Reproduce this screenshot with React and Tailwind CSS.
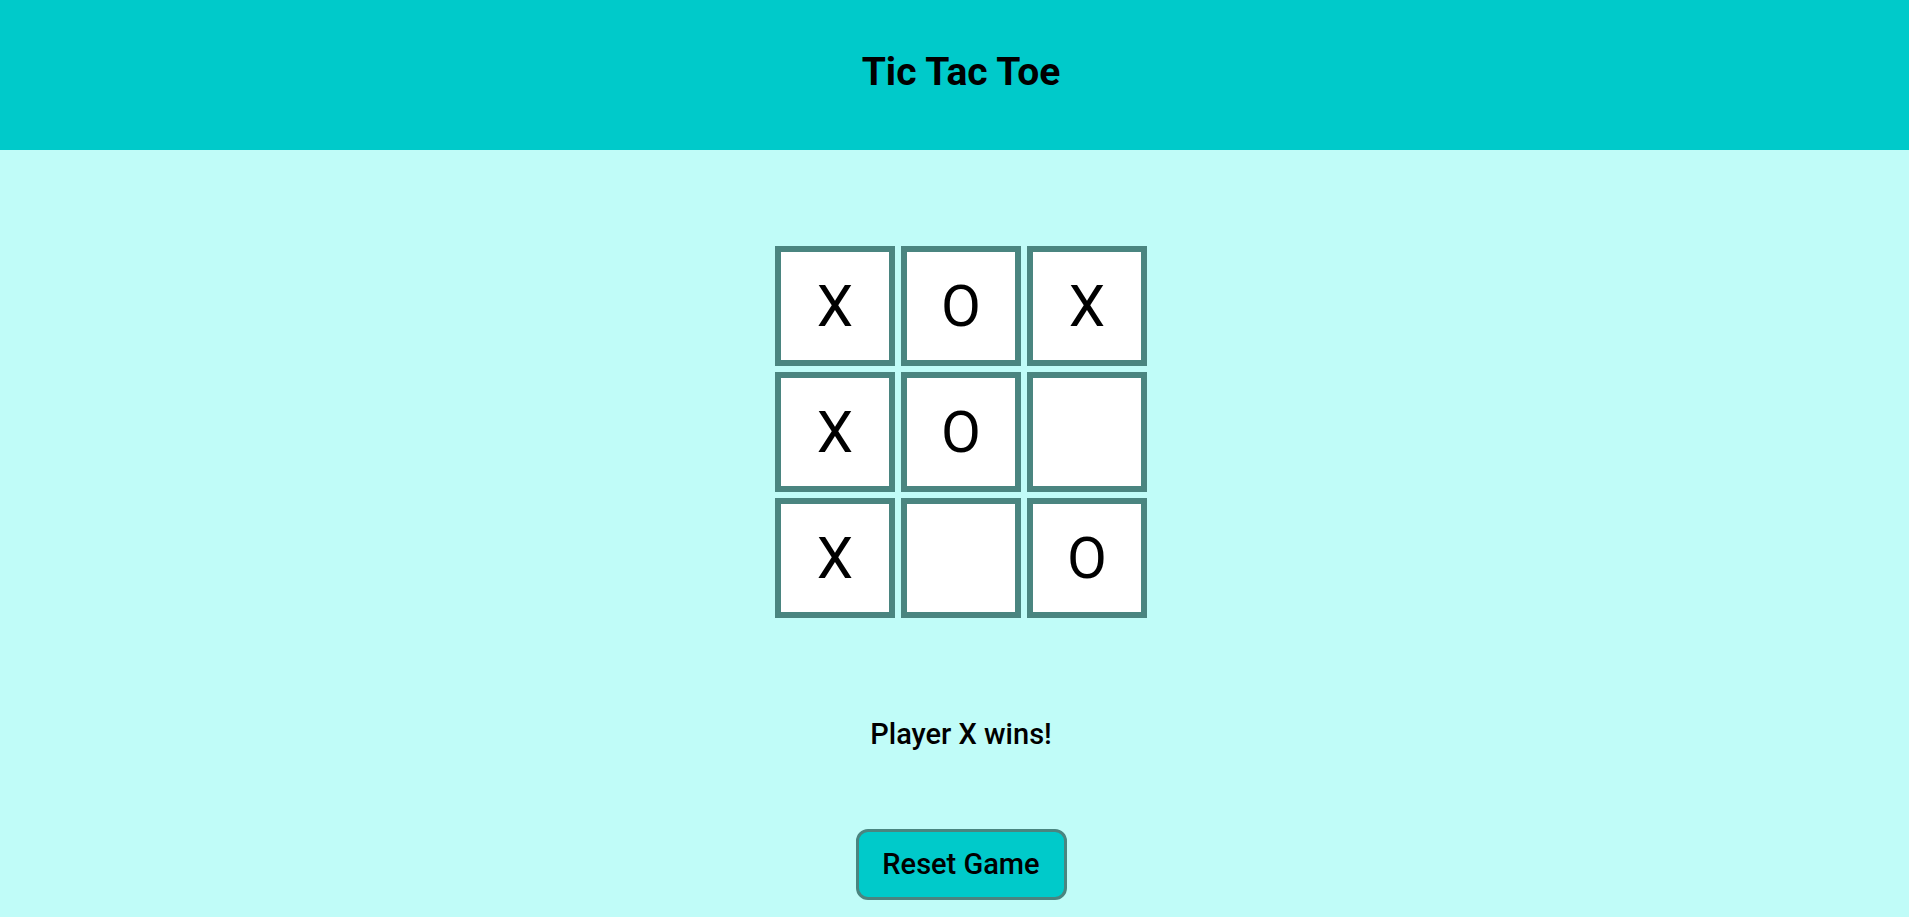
import React, { useState } from 'react';

const START = ['X', 'O', 'X', 'X', 'O', '', 'X', '', 'O'];

// Cell of the board
function Square({ value, onClick }) {
    return (
        <button
            onClick={onClick}
            className="w-[120px] h-[120px] bg-white border-[6px] border-[#4a8580] flex items-center justify-center text-[58px] leading-none text-black font-normal"
        >
            {value}
        </button>
    );
}

export default function App() {
    const [board, setBoard] = useState(START);

    const reset = () => setBoard(Array(9).fill(''));

    return (
        <div
            className="min-h-screen bg-[#c0fcf8] flex flex-col"
            style={{ fontFamily: 'Roboto, "Noto Sans", sans-serif' }}
        >
            <header className="h-[150px] bg-[#00caca] flex items-center justify-center pl-[13px] pb-[6px]">
                <h1 className="text-[39px] leading-none font-bold text-black">Tic Tac Toe</h1>
            </header>

            <main className="flex flex-col items-center pl-[13px]">
                <div className="mt-[96px] grid grid-cols-[repeat(3,120px)] gap-[6px]">
                    {board.map((v, i) => (
                        <Square
                            key={i}
                            value={v}
                            onClick={() => {
                                if (board[i]) return;
                                const next = [...board];
                                next[i] = 'X';
                                setBoard(next);
                            }}
                        />
                    ))}
                </div>

                <p className="mt-[102px] text-[29px] leading-none font-medium text-black">Player X wins!</p>

                <button
                    onClick={reset}
                    className="mt-[80px] w-[211px] h-[71px] rounded-[12px] border-[3px] border-[#4a8580] bg-[#00caca] text-[29px] leading-none font-medium text-black"
                >
                    Reset Game
                </button>
            </main>
        </div>
    );
}
